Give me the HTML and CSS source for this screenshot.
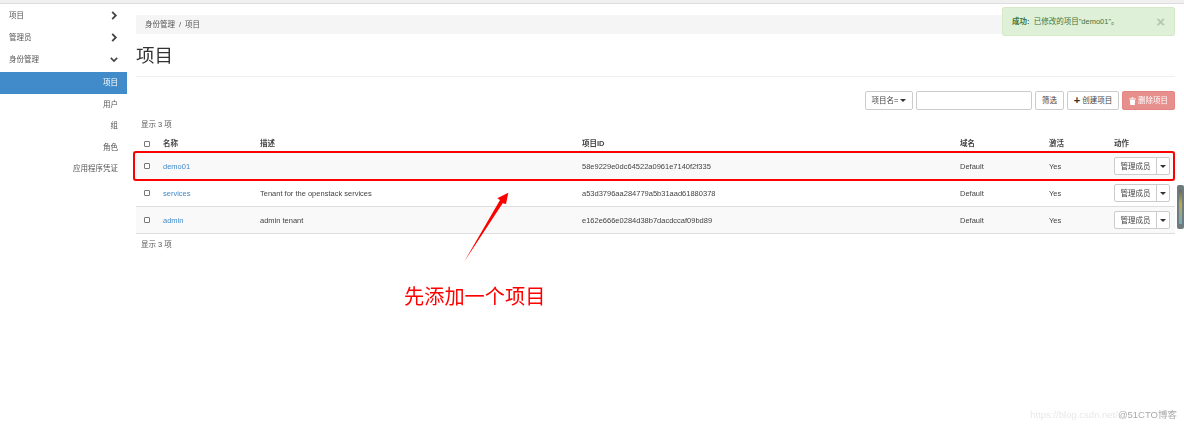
FILE: index.html
```html
<!DOCTYPE html>
<html lang="zh">
<head>
<meta charset="utf-8">
<title>项目</title>
<link rel="stylesheet" href="styles.css">
</head>
<body>
<div class="topbar"></div>
<div class="layout">
  <nav class="sidebar">
    <div class="nav-top"><span>项目</span><svg class="chev" viewBox="0 0 8 10"><path d="M2 1l4 4-4 4"/></svg></div>
    <div class="nav-top"><span>管理员</span><svg class="chev" viewBox="0 0 8 10"><path d="M2 1l4 4-4 4"/></svg></div>
    <div class="nav-top"><span>身份管理</span><svg class="chev" viewBox="0 0 10 8"><path d="M1 2l4 4 4-4"/></svg></div>
    <div class="nav-sub active">项目</div>
    <div class="nav-sub">用户</div>
    <div class="nav-sub">组</div>
    <div class="nav-sub">角色</div>
    <div class="nav-sub">应用程序凭证</div>
  </nav>
  <main class="main">
    <div class="breadcrumb"><span>身份管理</span><span class="sep">/</span><span>项目</span></div>
    <h1 class="title">项目</h1>
    <div class="toolbar">
      <button class="btn w-select">项目名= <i class="caret"></i></button>
      <input class="search" type="text">
      <button class="btn w-filter">筛选</button>
      <button class="btn w-create"><b class="plus">+</b> 创建项目</button>
      <button class="btn w-delete danger"><svg class="trash" viewBox="0 0 8 9"><path d="M0 1.5h8v1H0zM3 .3h2v1H3zM1 3h6l-.4 6H1.4z"/></svg> 删除项目</button>
    </div>
    <div class="count">显示 3 项</div>
    <table class="table">
      <thead>
        <tr><th class="c-check"><i class="check"></i></th><th class="c-name">名称</th><th class="c-desc">描述</th><th class="c-id">项目ID</th><th class="c-domain">域名</th><th class="c-on">激活</th><th>动作</th></tr>
      </thead>
      <tbody>
        <tr class="odd"><td><i class="check"></i></td><td><a>demo01</a></td><td></td><td>58e9229e0dc64522a0961e7140f2f335</td><td>Default</td><td>Yes</td><td><div class="split"><span class="split-main">管理成员</span><span class="split-caret"><i class="caret"></i></span></div></td></tr>
        <tr><td><i class="check"></i></td><td><a>services</a></td><td>Tenant for the openstack services</td><td>a53d3796aa284779a5b31aad61880378</td><td>Default</td><td>Yes</td><td><div class="split"><span class="split-main">管理成员</span><span class="split-caret"><i class="caret"></i></span></div></td></tr>
        <tr class="odd"><td><i class="check"></i></td><td><a>admin</a></td><td>admin tenant</td><td>e162e666e0284d38b7dacdccaf09bd89</td><td>Default</td><td>Yes</td><td><div class="split"><span class="split-main">管理成员</span><span class="split-caret"><i class="caret"></i></span></div></td></tr>
      </tbody>
    </table>
    <div class="count bottom">显示 3 项</div>
  </main>
</div>
<div class="alert"><span><b>成功:</b>&nbsp;&nbsp;已修改的项目"demo01"。</span><span class="close">×</span></div>
<div class="highlight"></div>
<svg class="arrow" viewBox="0 0 46 71"><path d="M0 70L36 8 33.3 6.3 44.3.7 42 12 38.7 11.3Z"/></svg>
<div class="note">先添加一个项目</div>
<div class="grip"><i></i></div>
<div class="watermark"><span class="wm-light">https://blog.csdn.net/</span><span class="wm-dark">@51CTO博客</span></div>
</body>
</html>
```
FILE: styles.css
```css
* { box-sizing: border-box; }
html, body { margin: 0; padding: 0; }
body {
  width: 1184px;
  height: 426px;
  overflow: hidden;
  background: #fff;
  color: #444;
  font: 7.5px/11px "Liberation Sans", "Noto Sans CJK SC", sans-serif;
  position: relative;
  filter: blur(0.4px);
}
.topbar { height: 4px; background: #f0f0f0; border-bottom: 1px solid #ddd; }
.layout { display: flex; align-items: flex-start; }
.sidebar { width: 127px; flex: none; color: #555; }
.nav-top {
  height: 22px;
  display: flex;
  align-items: center;
  justify-content: space-between;
  padding: 0 9px;
}
.nav-top:nth-child(3) { margin-bottom: 2px; }
.chev { width: 8px; height: 9px; fill: none; stroke: #444; stroke-width: 2; }
.nav-sub { height: 21.6px; line-height: 21.6px; text-align: right; padding-right: 9px; }
.nav-sub.active { background: #428bca; color: #fff; }
.main { margin-left: 9px; width: 1039px; }
.breadcrumb {
  margin-top: 11px;
  height: 19px;
  background: #f5f5f5;
  border-radius: 2px;
  padding: 0 9px;
  display: flex;
  align-items: center;
  gap: 4px;
  color: #555;
}
.title {
  margin: 0;
  padding-top: 10px;
  height: 43px;
  font-size: 18.5px;
  line-height: 24px;
  font-weight: 400;
  color: #333;
  border-bottom: 1px solid #eee;
}
.toolbar { margin-top: 14px; display: flex; justify-content: flex-end; gap: 3px; height: 19px; }
.btn {
  font: inherit;
  color: #444;
  background: #fff;
  border: 1px solid #ccc;
  border-radius: 2px;
  padding: 0;
  height: 19px;
  display: inline-flex;
  align-items: center;
  justify-content: center;
  gap: 2px;
}
.w-select { width: 48px; }
.w-filter { width: 29px; }
.w-create { width: 52px; }
.w-delete { width: 53px; }
.plus { font-size: 11px; color: #333; }
.danger { background: #e68f8d; border-color: #e48584; color: #fff; }
.trash { width: 7px; height: 8px; fill: #fff; }
.search { width: 116px; height: 19px; border: 1px solid #ccc; border-radius: 2px; background: #fff; }
.caret {
  display: inline-block;
  border-top: 3px solid #333;
  border-left: 3px solid transparent;
  border-right: 3px solid transparent;
}
.count { margin: 9px 0 0 5px; height: 11px; color: #555; }
.count.bottom { margin-top: 5px; }
.table { width: 1039px; border-collapse: collapse; table-layout: fixed; margin-top: 8px; }
.table th { height: 13px; padding: 0 0 3px 0; text-align: left; font-weight: 700; color: #444; vertical-align: middle; }
.table td { height: 27px; padding: 0; border-top: 1px solid #ddd; vertical-align: middle; color: #444; }
.table tbody tr:last-child td { border-bottom: 1px solid #ddd; }
.odd td { background: #f9f9f9; }
.c-check { width: 27px; }
.c-name { width: 97px; }
.c-desc { width: 322px; }
.c-id { width: 378px; }
.c-domain { width: 89px; }
.c-on { width: 65px; }
.check {
  display: block;
  margin-left: 8px;
  width: 6px;
  height: 6px;
  border: 1px solid #777;
  border-radius: 1px;
  background: #fff;
}
.table a { color: #428bca; }
.split { display: flex; width: 56px; height: 18px; border: 1px solid #ccc; border-radius: 2px; background: #fff; }
.split-main { width: 42px; display: flex; align-items: center; justify-content: center; border-right: 1px solid #ccc; }
.split-caret { flex: 1; display: flex; align-items: center; justify-content: center; }
.alert {
  position: absolute;
  left: 1002px;
  top: 7px;
  width: 173px;
  height: 29px;
  background: #dff0d8;
  border: 1px solid #d6e9c6;
  border-radius: 2px;
  color: #3c763d;
  display: flex;
  align-items: center;
  justify-content: space-between;
  padding: 0 9px;
}
.close { font-size: 15px; font-weight: 700; color: #b5c6ae; }
.highlight {
  position: absolute;
  left: 133px;
  top: 151px;
  width: 1042px;
  height: 30px;
  border: 2px solid #f00;
  border-radius: 3px;
  box-shadow: 0 0 0.6px #f00;
}
.arrow { position: absolute; left: 464px; top: 192px; width: 46px; height: 71px; fill: #f00; }
.note {
  position: absolute;
  left: 404px;
  top: 283px;
  font-size: 20.2px;
  line-height: 28px;
  color: #f00;
}
.grip {
  position: absolute;
  left: 1177px;
  top: 185px;
  width: 7px;
  height: 44px;
  background: #6f7b7d;
  border-radius: 2px;
  padding: 5px 2px;
}
.grip i { display: block; height: 100%; background: linear-gradient(#666, #b9a94f 40%, #6fa8c8); }
.watermark { position: absolute; right: 7px; top: 409px; font-size: 9.5px; line-height: 12px; white-space: nowrap; }
.wm-light { color: #e8e8e8; }
.wm-dark { color: #aaa; }
```
